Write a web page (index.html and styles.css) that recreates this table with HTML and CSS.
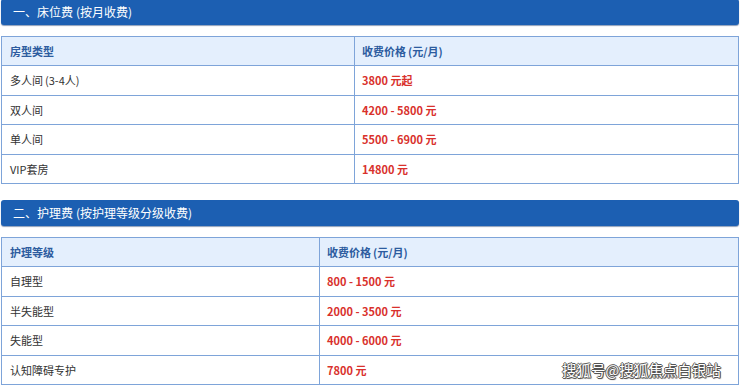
FILE: index.html
```html
<!DOCTYPE html>
<html lang="zh-CN">
<head>
<meta charset="utf-8">
<link rel="stylesheet" href="styles.css">
</head>
<body>
<div class="page">
  <section class="section">
    <h2 class="sec-title">一、床位费<span class="po">(</span>按月收费<span class="pc">)</span></h2>
    <div class="table t1">
      <div class="row head"><div class="cell">房型类型</div><div class="cell">收费价格<span class="po">(</span>元/月<span class="pc">)</span></div></div>
      <div class="row"><div class="cell">多人间<span class="po">(</span>3-4人<span class="pc">)</span></div><div class="cell price">3800 元起</div></div>
      <div class="row"><div class="cell">双人间</div><div class="cell price">4200 - 5800 元</div></div>
      <div class="row"><div class="cell">单人间</div><div class="cell price">5500 - 6900 元</div></div>
      <div class="row"><div class="cell">VIP套房</div><div class="cell price">14800 元</div></div>
    </div>
  </section>
  <section class="section">
    <h2 class="sec-title">二、护理费<span class="po">(</span>按护理等级分级收费<span class="pc">)</span></h2>
    <div class="table t2">
      <div class="row head"><div class="cell">护理等级</div><div class="cell">收费价格<span class="po">(</span>元/月<span class="pc">)</span></div></div>
      <div class="row"><div class="cell">自理型</div><div class="cell price">800 - 1500 元</div></div>
      <div class="row"><div class="cell">半失能型</div><div class="cell price">2000 - 3500 元</div></div>
      <div class="row"><div class="cell">失能型</div><div class="cell price">4000 - 6000 元</div></div>
      <div class="row"><div class="cell">认知障碍专护</div><div class="cell price">7800 元</div></div>
    </div>
  </section>
</div>
<div class="watermark">搜狐号@搜狐焦点白银站</div>
</body>
</html>
```
FILE: styles.css
```css
html, body {
  margin: 0;
  padding: 0;
  background: #ffffff;
  overflow: hidden;
}
body {
  font-family: "Noto Sans CJK SC", "Noto Sans", sans-serif;
  color: #333333;
  width: 740px;
  height: 385px;
  position: relative;
}
.page {
  margin-top: -1px;
  padding-left: 1px;
  width: 738px;
}
.section + .section {
  margin-top: 16px;
}
.sec-title {
  margin: 0;
  height: 26px;
  box-sizing: border-box;
  background: #1c5fb2;
  border-radius: 3px;
  color: #ffffff;
  font-size: 12px;
  font-weight: 400;
  line-height: 26px;
  padding-left: 12px;
  box-shadow: 0 1px 1px rgba(0, 40, 100, 0.45);
}
.sec-title .po { padding-left: 3px; }
.sec-title .pc { padding-right: 3px; }
.table {
  margin-top: 11px;
  border-top: 1px solid #7ea4d9;
  border-left: 1px solid #7ea4d9;
  border-right: 1px solid #7ea4d9;
}
.row {
  display: grid;
  height: 29.5px;
  box-sizing: border-box;
  border-bottom: 1px solid #7ea4d9;
}
.t1 .row { grid-template-columns: 352px 1fr; }
.t2 .row { grid-template-columns: 317px 1fr; }
.cell {
  display: flex;
  align-items: center;
  padding-left: 8px;
  font-size: 11px;
  white-space: nowrap;
}
.cell .po { padding-left: 2px; }
.cell .pc { padding-right: 2px; }
.cell + .cell {
  border-left: 1px solid #7ea4d9;
  padding-left: 7px;
}
.row.head {
  background: #e4effd;
  height: 29px;
}
.row.head .cell {
  color: #2d5c9f;
  font-weight: 700;
}
.price {
  color: #d9312c;
  font-weight: 700;
}
.watermark {
  position: absolute;
  left: 562px;
  top: 359px;
  font-size: 14.5px;
  color: #ffffff;
  text-shadow: 1px 0 0 #555, -1px 0 0 #555, 0 1px 0 #555, 0 -1px 0 #555, 1px 1px 1px #444;
  white-space: nowrap;
}
```
